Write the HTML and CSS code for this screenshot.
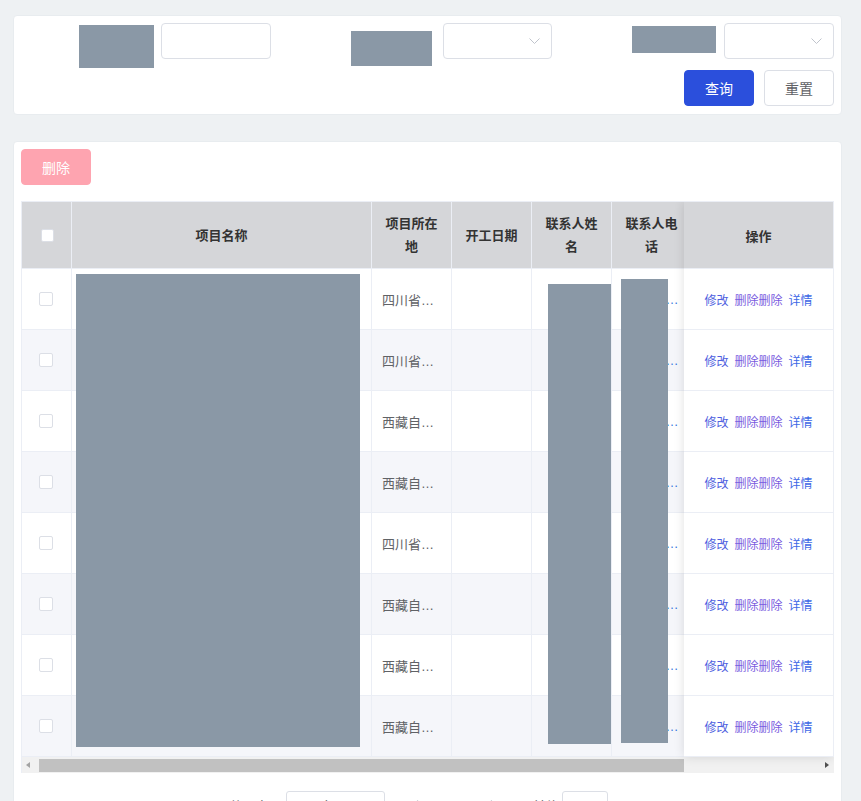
FILE: index.html
```html
<!DOCTYPE html>
<html lang="zh-CN">
<head>
<meta charset="utf-8">
<title>项目列表</title>
<link rel="stylesheet" href="styles.css">
</head>
<body>
<div class="page">
  <section class="card search-card">
    <div class="form-row">
      <div class="form-item item-1">
        <span class="mask mask-l1"></span>
        <div class="input"></div>
      </div>
      <div class="form-item item-2">
        <span class="mask mask-l2"></span>
        <div class="input select select-2">
          <svg class="chev" viewBox="0 0 11 6"><path d="M0.5 0.5 L5.5 5.5 L10.5 0.5" fill="none" stroke="#c0c4cc" stroke-width="1"/></svg>
        </div>
      </div>
      <div class="form-item item-3">
        <span class="mask mask-l3"></span>
        <div class="input select">
          <svg class="chev" viewBox="0 0 11 6"><path d="M0.5 0.5 L5.5 5.5 L10.5 0.5" fill="none" stroke="#c0c4cc" stroke-width="1"/></svg>
        </div>
      </div>
    </div>
    <div class="btn-row">
      <button class="btn btn-primary">查询</button>
      <button class="btn">重置</button>
    </div>
  </section>

  <section class="card table-card">
    <button class="btn btn-danger">删除</button>
    <div class="table">
      <div class="table-scroll">
        <div class="trow thead">
          <div class="cell cell-check"><span class="checkbox checkbox-head"></span></div>
          <div class="cell">项目名称</div>
          <div class="cell">项目所在地</div>
          <div class="cell">开工日期</div>
          <div class="cell">联系人姓名</div>
          <div class="cell">联系人电话</div>
          <div class="cell"></div>
          <div class="cell"></div>
        </div>
        <div class="trow">
          <div class="cell cell-check"><span class="checkbox"></span></div>
          <div class="cell"></div>
          <div class="cell"><span class="ellip">四川省成都市</span></div>
          <div class="cell"></div>
          <div class="cell"></div>
          <div class="cell"><span class="ellip link">13800000000</span></div>
          <div class="cell"></div>
          <div class="cell"></div>
        </div>
        <div class="trow striped">
          <div class="cell cell-check"><span class="checkbox"></span></div>
          <div class="cell"></div>
          <div class="cell"><span class="ellip">四川省成都市</span></div>
          <div class="cell"></div>
          <div class="cell"></div>
          <div class="cell"><span class="ellip link">13800000000</span></div>
          <div class="cell"></div>
          <div class="cell"></div>
        </div>
        <div class="trow">
          <div class="cell cell-check"><span class="checkbox"></span></div>
          <div class="cell"></div>
          <div class="cell"><span class="ellip">西藏自治区拉萨市</span></div>
          <div class="cell"></div>
          <div class="cell"></div>
          <div class="cell"><span class="ellip link">13800000000</span></div>
          <div class="cell"></div>
          <div class="cell"></div>
        </div>
        <div class="trow striped">
          <div class="cell cell-check"><span class="checkbox"></span></div>
          <div class="cell"></div>
          <div class="cell"><span class="ellip">西藏自治区拉萨市</span></div>
          <div class="cell"></div>
          <div class="cell"></div>
          <div class="cell"><span class="ellip link">13800000000</span></div>
          <div class="cell"></div>
          <div class="cell"></div>
        </div>
        <div class="trow">
          <div class="cell cell-check"><span class="checkbox"></span></div>
          <div class="cell"></div>
          <div class="cell"><span class="ellip">四川省成都市</span></div>
          <div class="cell"></div>
          <div class="cell"></div>
          <div class="cell"><span class="ellip link">13800000000</span></div>
          <div class="cell"></div>
          <div class="cell"></div>
        </div>
        <div class="trow striped">
          <div class="cell cell-check"><span class="checkbox"></span></div>
          <div class="cell"></div>
          <div class="cell"><span class="ellip">西藏自治区拉萨市</span></div>
          <div class="cell"></div>
          <div class="cell"></div>
          <div class="cell"><span class="ellip link">13800000000</span></div>
          <div class="cell"></div>
          <div class="cell"></div>
        </div>
        <div class="trow">
          <div class="cell cell-check"><span class="checkbox"></span></div>
          <div class="cell"></div>
          <div class="cell"><span class="ellip">西藏自治区拉萨市</span></div>
          <div class="cell"></div>
          <div class="cell"></div>
          <div class="cell"><span class="ellip link">13800000000</span></div>
          <div class="cell"></div>
          <div class="cell"></div>
        </div>
        <div class="trow striped">
          <div class="cell cell-check"><span class="checkbox"></span></div>
          <div class="cell"></div>
          <div class="cell"><span class="ellip">西藏自治区拉萨市</span></div>
          <div class="cell"></div>
          <div class="cell"></div>
          <div class="cell"><span class="ellip link">13800000000</span></div>
          <div class="cell"></div>
          <div class="cell"></div>
        </div>
      </div>
      <div class="hscroll">
        <span class="arrow arrow-l"></span>
        <span class="thumb"></span>
        <span class="arrow arrow-r"></span>
      </div>

      <div class="fixed-col">
        <div class="fcell fhead">操作</div>
        <div class="fcell"><a class="op op-edit">修改</a><a class="op op-del">删除</a><a class="op op-del op-gap">删除</a><a class="op op-info">详情</a></div>
        <div class="fcell"><a class="op op-edit">修改</a><a class="op op-del">删除</a><a class="op op-del op-gap">删除</a><a class="op op-info">详情</a></div>
        <div class="fcell"><a class="op op-edit">修改</a><a class="op op-del">删除</a><a class="op op-del op-gap">删除</a><a class="op op-info">详情</a></div>
        <div class="fcell"><a class="op op-edit">修改</a><a class="op op-del">删除</a><a class="op op-del op-gap">删除</a><a class="op op-info">详情</a></div>
        <div class="fcell"><a class="op op-edit">修改</a><a class="op op-del">删除</a><a class="op op-del op-gap">删除</a><a class="op op-info">详情</a></div>
        <div class="fcell"><a class="op op-edit">修改</a><a class="op op-del">删除</a><a class="op op-del op-gap">删除</a><a class="op op-info">详情</a></div>
        <div class="fcell"><a class="op op-edit">修改</a><a class="op op-del">删除</a><a class="op op-del op-gap">删除</a><a class="op op-info">详情</a></div>
        <div class="fcell"><a class="op op-edit">修改</a><a class="op op-del">删除</a><a class="op op-del op-gap">删除</a><a class="op op-info">详情</a></div>
      </div>

      <span class="mask mask-name"></span>
      <span class="mask mask-contact"></span>
      <span class="mask mask-phone"></span>
    </div>

    <div class="pagination">
      <span class="pg-total">共 8 条</span>
      <div class="pg-size">
        <span>10条/页</span>
        <svg class="chev" viewBox="0 0 11 6"><path d="M0.5 0.5 L5.5 5.5 L10.5 0.5" fill="none" stroke="#c0c4cc" stroke-width="1"/></svg>
      </div>
      <span class="pg-btn pg-prev"><svg viewBox="0 0 6 10" class="pg-arrow"><path d="M5 0.5 L1 5 L5 9.5" fill="none" stroke="#c0c4cc" stroke-width="1.2"/></svg></span>
      <span class="pg-btn pg-num">1</span>
      <span class="pg-btn pg-next"><svg viewBox="0 0 6 10" class="pg-arrow"><path d="M1 0.5 L5 5 L1 9.5" fill="none" stroke="#c0c4cc" stroke-width="1.2"/></svg></span>
      <span class="pg-jump">前往</span>
      <span class="pg-input">1</span>
      <span class="pg-unit">页</span>
    </div>
  </section>
</div>
</body>
</html>
```

FILE: styles.css
```css
* { box-sizing: border-box; }
html, body { margin: 0; padding: 0; }
body {
  background: #eef1f3;
  font-family: "Liberation Sans", "Noto Sans CJK SC", sans-serif;
  font-size: 13px;
  color: #606266;
  height: 801px;
  overflow: hidden;
}
.page { padding: 15px 0 0 13px; }

.card {
  width: 829px;
  background: #fff;
  border: 1px solid #e8ecef;
  border-radius: 4px;
}

/* search card */
.search-card { height: 100px; padding: 7px 7px 8px 0; }
.form-row { display: flex; align-items: flex-start; }
.form-item { display: flex; align-items: flex-start; }
.item-1 { margin-left: 65px; gap: 7px; }
.item-2 { margin-left: 80px; gap: 11px; }
.item-3 { margin-left: 80px; gap: 8px; }

.mask { display: block; background: #8a98a6; }
.mask-l1 { width: 75px; height: 43px; margin-top: 2px; }
.mask-l2 { width: 81px; height: 35px; margin-top: 8px; }
.mask-l3 { width: 84px; height: 27px; margin-top: 3px; }

.input {
  width: 110px;
  height: 36px;
  border: 1px solid #dcdfe6;
  border-radius: 4px;
  background: #fff;
}
.select {
  display: flex;
  align-items: center;
  justify-content: flex-end;
  padding-right: 11px;
}
.select-2 { width: 109px; }
.chev { width: 11px; height: 6px; display: block; }

.btn-row {
  display: flex;
  justify-content: flex-end;
  gap: 10px;
  margin-top: 2px;
}
.btn {
  width: 70px;
  height: 36px;
  padding: 0;
  border: 1px solid #dcdfe6;
  border-radius: 4px;
  background: #fff;
  color: #606266;
  font: 14px "Liberation Sans", "Noto Sans CJK SC", sans-serif;
  display: flex;
  align-items: center;
  justify-content: center;
}
.btn-primary { background: #2b4fdc; border-color: #2b4fdc; color: #fff; }
.btn-danger { background: #fea4b0; border-color: #fea4b0; color: #fff; }

/* table card */
.table-card { margin-top: 26px; height: 720px; padding: 7px 7px 0; }

.table {
  position: relative;
  margin-top: 16px;
  width: 813px;
  border-top: 1px solid #ebeef5;
  border-left: 1px solid #ebeef5;
  overflow: hidden;
}
.table-scroll { width: 812px; overflow: hidden; }
.trow {
  display: grid;
  grid-template-columns: 50px 300px 80px 80px 80px 80px 160px 150px;
  width: 980px;
}
.cell {
  height: 61px;
  min-width: 0;
  padding: 0 10px;
  display: flex;
  align-items: center;
  border-right: 1px solid #ebeef5;
  border-bottom: 1px solid #ebeef5;
  background: #fff;
}
.thead .cell {
  height: 67px;
  background: #d5d6d9;
  justify-content: center;
  text-align: center;
  font-weight: bold;
  color: #333;
  line-height: 23px;
}
.striped .cell { background: #f5f6fa; }
.cell-check { justify-content: center; padding: 0; }

.checkbox {
  width: 14px;
  height: 14px;
  border: 1px solid #dcdfe6;
  border-radius: 2px;
  background: #fff;
  display: block;
  margin-left: -2px;
}
.checkbox-head { width: 13px; height: 13px; margin-left: 2px; }

.ellip {
  display: block;
  width: 100%;
  overflow: hidden;
  white-space: nowrap;
  text-overflow: ellipsis;
}
.link { color: #3a7be0; }

.hscroll {
  position: relative;
  height: 16px;
  background: #f1f1f1;
}
.thumb {
  position: absolute;
  left: 17px;
  top: 2px;
  width: 645px;
  height: 13px;
  background: #c1c1c1;
}
.arrow {
  position: absolute;
  top: 5px;
  width: 0;
  height: 0;
  border-top: 3.5px solid transparent;
  border-bottom: 3.5px solid transparent;
}
.arrow-l { left: 4px; border-right: 4px solid #a3a3a3; }
.arrow-r { right: 5px; border-left: 4px solid #505050; }

.fixed-col {
  position: absolute;
  top: 0;
  right: 0;
  width: 150px;
  background: #fff;
  border-right: 1px solid #ebeef5;
  box-shadow: 0 0 10px rgba(0, 0, 0, 0.12);
}
.fcell {
  height: 61px;
  display: flex;
  align-items: center;
  justify-content: center;
  border-bottom: 1px solid #ebeef5;
  font-size: 12px;
  background: #fff;
}
.fhead {
  height: 67px;
  background: #d5d6d9;
  font-size: 13px;
  font-weight: bold;
  color: #333;
}
.op { cursor: pointer; }
.op-edit { color: #4f5fe0; margin-right: 6px; }
.op-del { color: #7a5ce0; }
.op-gap { margin-right: 6px; }
.op-info { color: #3d68e6; }

.mask-name, .mask-contact, .mask-phone { position: absolute; }
.mask-name { left: 54px; top: 72px; width: 284px; height: 473px; }
.mask-contact { left: 526px; top: 82px; width: 63px; height: 460px; }
.mask-phone { left: 599px; top: 77px; width: 47px; height: 464px; }

/* pagination */
.pagination {
  display: flex;
  justify-content: center;
  align-items: center;
  margin-top: 18px;
  height: 28px;
  font-size: 13px;
  color: #606266;
}
.pg-total { margin-right: 16px; }
.pg-size {
  width: 99px;
  height: 28px;
  border: 1px solid #dcdfe6;
  border-radius: 3px;
  display: flex;
  align-items: center;
  justify-content: space-between;
  padding: 0 10px 0 20px;
}
.pg-btn {
  width: 30px;
  height: 28px;
  display: flex;
  align-items: center;
  justify-content: center;
}
.pg-prev { margin-left: 16px; }
.pg-num { margin-left: 7px; color: #2b4fdc; font-weight: bold; }
.pg-next { margin-left: 10px; }
.pg-arrow { width: 6px; height: 10px; display: block; }
.pg-jump { margin-left: 25px; }
.pg-input {
  width: 46px;
  height: 28px;
  margin: 0 5px 0 3px;
  border: 1px solid #dcdfe6;
  border-radius: 3px;
  display: flex;
  align-items: center;
  justify-content: center;
}
```
